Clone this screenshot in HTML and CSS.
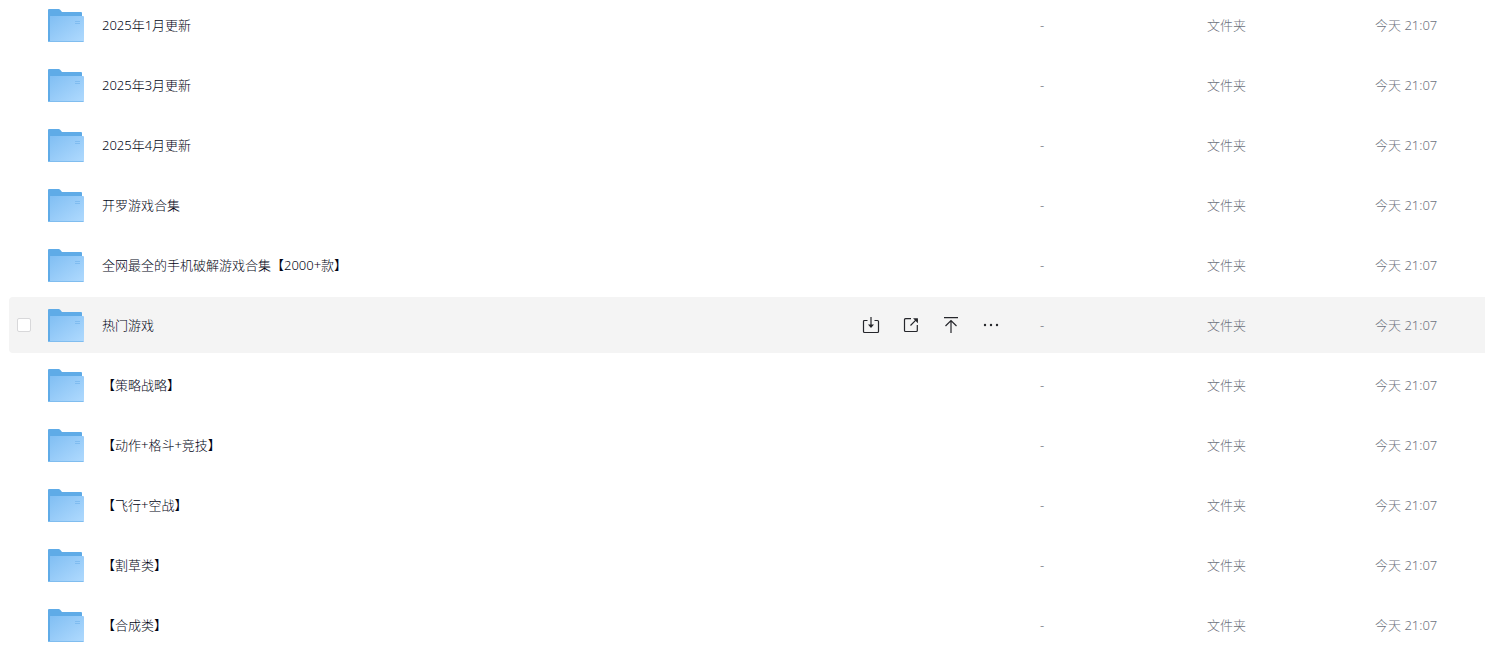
FILE: index.html
```html
<!DOCTYPE html>
<html lang="zh-CN">
<head>
    <meta charset="UTF-8">
    <meta name="viewport" content="width=device-width, initial-scale=1.0">
    <title>文件列表</title>
    <link rel="stylesheet" href="styles.css">
</head>
<body>

    <!-- Shared icons -->
    <svg class="sprite" aria-hidden="true">
        <defs>
            <linearGradient id="front" x1="0" y1="0" x2="1" y2="1">
                <stop offset="0" stop-color="#80bef3"/>
                <stop offset="1" stop-color="#b0dafe"/>
            </linearGradient>
            <symbol id="folder" viewBox="0 0 36 34">
                <path d="M0 2Q0 1 1 1H10.5Q11.5 1 12.2 1.8L14 4H33Q34 4 34 5V34H0Z" fill="#5fabe7"/>
                <path d="M2 8H35Q36 8 36 9V33Q36 34 35 34H1Q2 34 2 33Z" fill="url(#front)"/>
                <path d="M0 33.5H35.5" stroke="#80bdef" stroke-width="1"/>
                <path d="M27 13.5H32M27 15.5H32" stroke="#74b5ec" stroke-width=".7"/>
            </symbol>
            <symbol id="save" viewBox="0 0 18 18">
                <path d="M5.5 4.5H2.5Q1.5 4.5 1.5 5.5V15.5Q1.5 16.5 2.5 16.5H15.5Q16.5 16.5 16.5 15.5V5.5Q16.5 4.5 15.5 4.5H12.5M9 1V9.5"/>
                <path class="fill" d="M7.3 9H10.7L9 11Z"/>
            </symbol>
            <symbol id="share" viewBox="0 0 18 18">
                <path d="M9 2.7H3.5Q2.5 2.7 2.5 3.7V14.5Q2.5 15.5 3.5 15.5H14.3Q15.3 15.5 15.3 14.5V9M8.5 9.5L13.8 4.2"/>
                <path class="fill" d="M12.5 2.9H15.3V5.7Z"/>
            </symbol>
            <symbol id="top" viewBox="0 0 18 18">
                <path d="M2 1.6H16M9 17V4.5M3.5 10L9 4.5L14.5 10"/>
            </symbol>
            <symbol id="more" viewBox="0 0 18 18">
                <circle class="dot" cx="3" cy="9" r="1.2"/>
                <circle class="dot" cx="9" cy="9" r="1.2"/>
                <circle class="dot" cx="15" cy="9" r="1.2"/>
            </symbol>
        </defs>
    </svg>

    <main class="file-list">
        <table class="files">
            <colgroup>
                <col class="col-check">
                <col class="col-name">
                <col class="col-size">
                <col class="col-type">
                <col class="col-date">
            </colgroup>
            <tbody>
                <tr>
                    <td></td>
                    <td><div class="name"><svg class="folder"><use href="#folder"/></svg><a href="#">2025年1月更新</a></div></td>
                    <td>-</td>
                    <td>文件夹</td>
                    <td>今天 21:07</td>
                </tr>
                <tr>
                    <td></td>
                    <td><div class="name"><svg class="folder"><use href="#folder"/></svg><a href="#">2025年3月更新</a></div></td>
                    <td>-</td>
                    <td>文件夹</td>
                    <td>今天 21:07</td>
                </tr>
                <tr>
                    <td></td>
                    <td><div class="name"><svg class="folder"><use href="#folder"/></svg><a href="#">2025年4月更新</a></div></td>
                    <td>-</td>
                    <td>文件夹</td>
                    <td>今天 21:07</td>
                </tr>
                <tr>
                    <td></td>
                    <td><div class="name"><svg class="folder"><use href="#folder"/></svg><a href="#">开罗游戏合集</a></div></td>
                    <td>-</td>
                    <td>文件夹</td>
                    <td>今天 21:07</td>
                </tr>
                <tr>
                    <td></td>
                    <td><div class="name"><svg class="folder"><use href="#folder"/></svg><a href="#">全网最全的手机破解游戏合集【2000+款】</a></div></td>
                    <td>-</td>
                    <td>文件夹</td>
                    <td>今天 21:07</td>
                </tr>
                <tr class="active">
                    <td><input type="checkbox" class="check" aria-label="热门游戏"></td>
                    <td>
                        <div class="name">
                            <svg class="folder"><use href="#folder"/></svg><a href="#">热门游戏</a>
                            <div class="actions">
                                <button type="button" aria-label="保存"><svg><use href="#save"/></svg></button>
                                <button type="button" aria-label="分享"><svg><use href="#share"/></svg></button>
                                <button type="button" aria-label="置顶"><svg><use href="#top"/></svg></button>
                                <button type="button" aria-label="更多"><svg><use href="#more"/></svg></button>
                            </div>
                        </div>
                    </td>
                    <td>-</td>
                    <td>文件夹</td>
                    <td>今天 21:07</td>
                </tr>
                <tr>
                    <td></td>
                    <td><div class="name"><svg class="folder"><use href="#folder"/></svg><a href="#">【策略战略】</a></div></td>
                    <td>-</td>
                    <td>文件夹</td>
                    <td>今天 21:07</td>
                </tr>
                <tr>
                    <td></td>
                    <td><div class="name"><svg class="folder"><use href="#folder"/></svg><a href="#">【动作+格斗+竞技】</a></div></td>
                    <td>-</td>
                    <td>文件夹</td>
                    <td>今天 21:07</td>
                </tr>
                <tr>
                    <td></td>
                    <td><div class="name"><svg class="folder"><use href="#folder"/></svg><a href="#">【飞行+空战】</a></div></td>
                    <td>-</td>
                    <td>文件夹</td>
                    <td>今天 21:07</td>
                </tr>
                <tr>
                    <td></td>
                    <td><div class="name"><svg class="folder"><use href="#folder"/></svg><a href="#">【割草类】</a></div></td>
                    <td>-</td>
                    <td>文件夹</td>
                    <td>今天 21:07</td>
                </tr>
                <tr>
                    <td></td>
                    <td><div class="name"><svg class="folder"><use href="#folder"/></svg><a href="#">【合成类】</a></div></td>
                    <td>-</td>
                    <td>文件夹</td>
                    <td>今天 21:07</td>
                </tr>
            </tbody>
        </table>
    </main>

</body>
</html>
```

FILE: styles.css
```css
body {
    margin: 0;
    background-color: #fff;
    color: #03081a;
    font-family: "Noto Sans", "Noto Sans CJK SC", sans-serif;
    font-size: 13px;
    font-weight: 300;
    line-height: 20px;
}

.sprite {
    display: block;
    width: 0;
    height: 0;
}

.file-list {
    height: 100vh;
    overflow: hidden;
    padding-left: 9px;
    box-sizing: border-box;
}

/* The list is scrolled a little past its first row */
.files {
    width: 100%;
    margin-top: -7px;
    table-layout: fixed;
    border-collapse: separate;
    border-spacing: 0 4px;
}

.col-check {
    width: 39px;
}

.col-size {
    width: 167px;
}

.col-type {
    width: 168px;
}

.col-date {
    width: 110px;
}

.files td {
    height: 56px;
    padding: 0;
    vertical-align: middle;
    color: #6c717c;
}

.active td {
    background-color: #f4f4f4;
}

.active td:first-child {
    border-radius: 4px 0 0 4px;
}

.check {
    display: block;
    appearance: none;
    width: 14px;
    height: 14px;
    margin: 0 0 0 8px;
    border: 1px solid #d8d8da;
    border-radius: 2px;
    background-color: #fff;
}

.name {
    display: flex;
    align-items: center;
    gap: 18px;
}

.name a {
    color: #000414;
    text-decoration: none;
}

.folder {
    width: 36px;
    height: 34px;
}

.actions {
    display: flex;
    gap: 22px;
    margin-left: auto;
    padding-right: 40px;
}

.actions button {
    padding: 0;
    border: 0;
    background: none;
    cursor: pointer;
}

.actions svg {
    display: block;
    width: 18px;
    height: 18px;
    fill: none;
    stroke: #25262b;
    stroke-width: 1.2;
}

.actions svg .fill,
.fill {
    fill: #25262b;
}

.dot {
    fill: #25262b;
    stroke: none;
}
```
